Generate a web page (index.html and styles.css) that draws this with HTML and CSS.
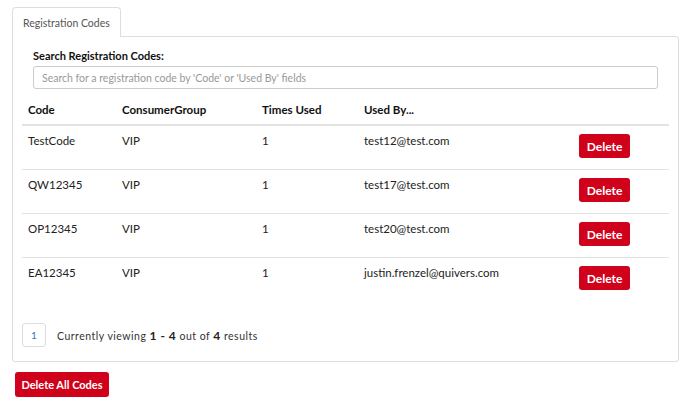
FILE: index.html
```html
<!DOCTYPE html>
<html>
<head>
<meta charset="utf-8">
<link rel="stylesheet" href="styles.css">
</head>
<body>
<div class="page">
  <div class="tabs">
    <div class="tab">Registration Codes</div>
  </div>
  <div class="panel">
    <div class="search">
      <label class="search-label">Search Registration Codes:</label>
      <input class="search-input" type="text" placeholder="Search for a registration code by 'Code' or 'Used By' fields">
    </div>
    <table class="codes">
      <colgroup>
        <col class="c1"><col class="c2"><col class="c3"><col class="c4"><col class="c5">
      </colgroup>
      <thead>
        <tr><th>Code</th><th>ConsumerGroup</th><th>Times Used</th><th>Used By...</th><th></th></tr>
      </thead>
      <tbody>
        <tr><td>TestCode</td><td>VIP</td><td>1</td><td>test12@test.com</td><td><button class="btn-del">Delete</button></td></tr>
        <tr><td>QW12345</td><td>VIP</td><td>1</td><td>test17@test.com</td><td><button class="btn-del">Delete</button></td></tr>
        <tr><td>OP12345</td><td>VIP</td><td>1</td><td>test20@test.com</td><td><button class="btn-del">Delete</button></td></tr>
        <tr><td>EA12345</td><td>VIP</td><td>1</td><td>justin.frenzel@quivers.com</td><td><button class="btn-del">Delete</button></td></tr>
      </tbody>
    </table>
    <div class="pager">
      <span class="page-box">1</span>
      <span class="pager-text">Currently viewing <b>1 - 4</b> out of <b>4</b> results</span>
    </div>
  </div>
  <button class="btn-all">Delete All Codes</button>
</div>
</body>
</html>
```
FILE: styles.css
```css
* { box-sizing: border-box; }
html, body { margin: 0; padding: 0; background: #fff; }
body { font-family: Lato, "Open Sans", sans-serif; color: #222; font-size: 11.5px; }
.page { padding: 7px 9px 0 12px; }
.tabs { display: flex; }
.tab {
  height: 30px;
  padding: 0 10px;
  display: flex; align-items: center;
  border: 1px solid #ddd; border-bottom: none;
  border-radius: 4px 4px 0 0;
  background: #fff;
  font-size: 10.5px; color: #555;
  margin-bottom: -1px;
  position: relative;
}
.panel {
  border: 1px solid #ddd;
  border-radius: 0 3px 3px 3px;
  padding: 12px 9px 14px 9px;
}
.search { padding: 0 11px; display: flex; flex-direction: column; }
.search-label { font-weight: bold; font-size: 11px; color: #111; line-height: 14px; }
.search-input {
  margin-top: 3px;
  height: 23px;
  border: 1px solid #ccc;
  border-radius: 3px;
  padding: 0 8px;
  font-family: Lato, sans-serif;
  font-size: 10.5px;
  color: #333;
}
.search-input::placeholder { color: #999; }
.codes { width: 100%; border-collapse: collapse; margin-top: 7px; table-layout: fixed; }
.c1 { width: 94px; } .c2 { width: 140px; } .c3 { width: 102px; } .c4 { width: 215px; }
.codes th {
  text-align: left; font-weight: bold; font-size: 11.5px; color: #111;
  padding: 6px 6px 6px; line-height: 16px;
  border-bottom: 2px solid #e3e3e3;
}
.codes td {
  vertical-align: top;
  padding: 7px 6px 11px; line-height: 16px;
  border-top: 1px solid #e3e3e3;
  font-size: 11.5px; color: #222;
}
.codes tbody tr:first-child td { border-top: none; }
.codes td:last-child { padding-top: 8px; padding-bottom: 11px; }
.btn-del {
  display: block;
  width: 51px; height: 24px;
  border: none; border-radius: 3px;
  background: #d0021b; color: #fff;
  font-family: Lato, sans-serif; font-weight: bold; font-size: 12px;
  padding: 0;
  margin: 0;
}
.pager { display: flex; align-items: center; margin-top: 22px; }
.page-box {
  width: 24px; height: 24px;
  border: 1px solid #ddd; border-radius: 3px;
  display: flex; align-items: center; justify-content: center;
  color: #337ab7; font-size: 10px;
}
.pager-text { margin-left: 11px; font-size: 10.5px; color: #333; letter-spacing: 0.5px; }
.pager-text b { font-size: 12px; font-weight: bold; color: #222; }
.btn-all {
  margin-top: 10px; margin-left: 3px;
  height: 25px; width: 94px;
  border: none; border-radius: 3px;
  background: #d0021b; color: #fff;
  font-family: Lato, sans-serif; font-weight: bold; font-size: 11px;
  padding: 0;
}
```
